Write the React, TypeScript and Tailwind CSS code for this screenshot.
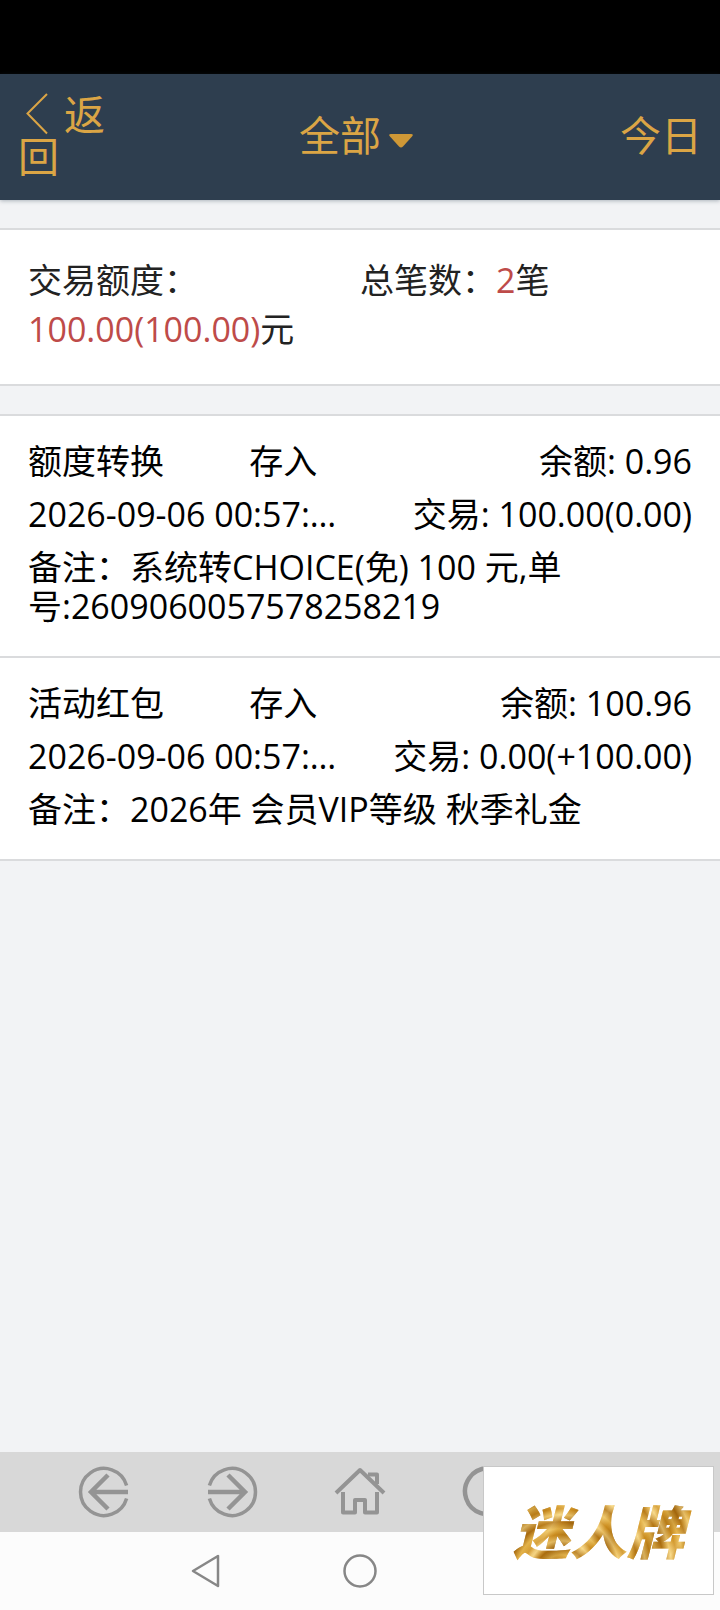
import React from 'react';

type TransactionRecord = {
  kind: string;
  direction: string;
  time: string;
  balance: string;
  amount: string;
  remark: string;
};

const records: TransactionRecord[] = [
  {
    kind: '额度转换',
    direction: '存入',
    time: '2026-09-06 00:57:…',
    balance: '0.96',
    amount: '100.00(0.00)',
    remark: '系统转CHOICE(免) 100 元,单号:2609060057578258219',
  },
  {
    kind: '活动红包',
    direction: '存入',
    time: '2026-09-06 00:57:…',
    balance: '100.96',
    amount: '0.00(+100.00)',
    remark: '2026年 会员VIP等级 秋季礼金',
  },
];

const Header: React.FC = () => (
  <header className="relative grid grid-cols-[1fr_auto_1fr] items-center bg-[#2e3e4f] px-[18px] pt-[19px] pb-[23px] text-[41px] leading-[42px] text-[#dba545] shadow-[0_1px_4px_rgba(46,62,79,0.35)]">
    <button className="w-[100px] text-left leading-[42px]">
      <svg className="mr-4 ml-2 inline-block h-[42px] w-[22px] align-bottom" viewBox="0 0 22 42" fill="none" stroke="currentColor" strokeWidth="2">
        <path d="M21 1 1.5 20.5 21 40.5" />
      </svg>
      返回
    </button>
    <button className="flex items-center pr-2">
      全部
      <svg className="mt-3 ml-2 h-[14px] w-6" viewBox="0 0 24 14" fill="#cf9836">
        <path d="M2 0h20q3 0 1 2.5L14 12.5q-2 2-4 0L1 2.5Q-1 0 2 0Z" />
      </svg>
    </button>
    <button className="justify-self-end">今日</button>
  </header>
);

const Summary: React.FC = () => (
  <section className="mt-7 grid grid-cols-2 border-y-2 border-[#dadbdd] bg-white px-7 pt-[26px] pb-[30px] leading-[49px] text-[#222]">
    <div>
      交易额度：<br />
      <span className="text-[#be4b49]">100.00(100.00)</span>元
    </div>
    <div>
      总笔数：<span className="text-[#be4b49]">2</span>笔
    </div>
  </section>
);

const RecordItem: React.FC<{ record: TransactionRecord }> = ({ record }) => (
  <li className="space-y-[14px] border-b-2 border-[#dadbdd] px-7 pt-[26px] pb-[30px] leading-[39px]">
    <div className="grid grid-cols-3">
      <span>{record.kind}</span>
      <span>{record.direction}</span>
      <span className="text-right whitespace-nowrap">余额: {record.balance}</span>
    </div>
    <div className="flex justify-between whitespace-nowrap">
      <span>{record.time}</span>
      <span>交易: {record.amount}</span>
    </div>
    <p>备注：{record.remark}</p>
  </li>
);

const Toolbar: React.FC = () => (
  <nav className="grid grid-cols-5 justify-items-center bg-[#d8d8d8] px-10 py-[14px] text-[#949494]">
    <button aria-label="后退">
      <svg className="h-[52px] w-[52px]" viewBox="0 0 52 52" fill="none" stroke="currentColor" strokeWidth="3.5">
        <path d="M48.6 19.5a23.5 23.5 0 1 0 0 13" />
        <path d="M50 26H13M30 9 13 26l17 17" strokeWidth="4.5" />
      </svg>
    </button>
    <button aria-label="前进">
      <svg className="h-[52px] w-[52px]" viewBox="0 0 52 52" fill="none" stroke="currentColor" strokeWidth="3.5">
        <path d="M3.4 19.5a23.5 23.5 0 1 1 0 13" />
        <path d="M2 26h37M22 9l17 17-17 17" strokeWidth="4.5" />
      </svg>
    </button>
    <button aria-label="首页">
      <svg className="h-[52px] w-[52px]" viewBox="0 0 52 52" fill="none" stroke="currentColor" strokeWidth="4" strokeLinejoin="round">
        <path d="M2 27 26 4l24 23" />
        <path d="M9 26v20.5h12V34h10v12.5h12V26M34 8.5h9V18" />
      </svg>
    </button>
    <button aria-label="刷新">
      <svg className="h-[52px] w-[52px]" viewBox="0 0 52 52" fill="none" stroke="currentColor" strokeWidth="4.5">
        <path d="M44 11A23 23 0 1 0 49 26M46 2v11H35" />
      </svg>
    </button>
  </nav>
);

const SystemNav: React.FC = () => (
  <nav className="grid grid-cols-3 items-center justify-items-center bg-[#fcfcfc] px-[18%] py-[22px] text-[#878787]">
    <button aria-label="返回上一页">
      <svg className="h-[34px] w-[34px]" viewBox="0 0 34 34" fill="none" stroke="currentColor" strokeWidth="2.5" strokeLinejoin="round">
        <path d="M29 2v30L4 17Z" />
      </svg>
    </button>
    <button aria-label="主屏幕">
      <svg className="h-[34px] w-[34px]" viewBox="0 0 34 34" fill="none" stroke="currentColor" strokeWidth="2.5">
        <circle cx="17" cy="17" r="15.5" />
      </svg>
    </button>
  </nav>
);

const App: React.FC = () => {
  return (
    <div
      lang="zh-CN"
      className="relative flex min-h-screen flex-col bg-[#f2f3f5] font-['Open_Sans','Noto_Sans_CJK_SC',sans-serif] text-[34px] text-black"
    >
      <div className="h-[74px] bg-black" />
      <Header />
      <main className="flex-1">
        <Summary />
        <ul className="mt-7 border-t-2 border-[#dadbdd] bg-white">
          {records.map((record) => (
            <RecordItem key={record.kind} record={record} />
          ))}
        </ul>
      </main>
      <footer>
        <Toolbar />
        <SystemNav />
      </footer>

      {/* Brand badge floating over the bottom bars */}
      <div className="absolute right-[6px] bottom-[15px] flex h-[129px] w-[231px] items-center justify-center border border-[#c8c8c8] bg-white pb-1">
        <span className="bg-[repeating-radial-gradient(circle_at_30%_120%,#a8690cb0_0px,#f6d684b0_7px,#c98a1cb0_13px,#e9bd57b0_19px,#a8690cb0_26px),repeating-linear-gradient(125deg,#9a5f0a_0px,#e0a83a_9px,#ffe9a8_17px,#c98a1c_24px,#8f5a0c_31px,#9a5f0a_38px)] bg-clip-text px-2 font-['Noto_Sans_CJK_SC',sans-serif] text-[57px] leading-[64px] font-black text-transparent italic">
          迷人牌
        </span>
      </div>
    </div>
  );
};

export default App;
